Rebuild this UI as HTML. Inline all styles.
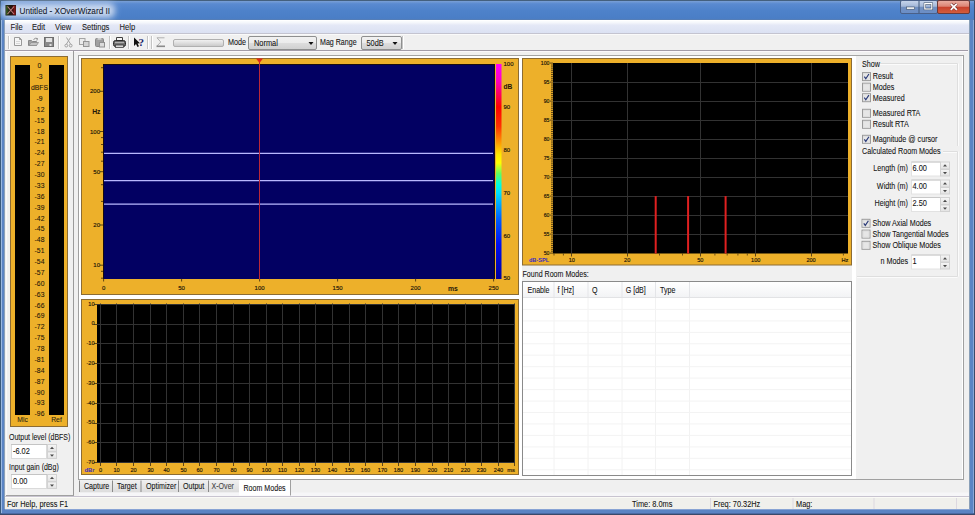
<!DOCTYPE html>
<html><head><meta charset="utf-8"><style>
html,body{margin:0;padding:0;width:975px;height:515px;overflow:hidden;background:#f0f0f0;}
svg{display:block;font-family:"Liberation Sans",sans-serif;}
</style></head><body>
<svg width="975" height="515" viewBox="0 0 975 515">
<defs><linearGradient id="title" x1="0" y1="0" x2="0" y2="1"><stop offset="0" stop-color="#7aa0d6"/><stop offset="0.15" stop-color="#5a8ad0"/><stop offset="0.5" stop-color="#4e82ca"/><stop offset="0.92" stop-color="#4a7ec6"/><stop offset="1" stop-color="#5a7eb0"/></linearGradient><linearGradient id="menu" x1="0" y1="0" x2="0" y2="1"><stop offset="0" stop-color="#ffffff"/><stop offset="0.18" stop-color="#f6f8fc"/><stop offset="0.4" stop-color="#e4e8f6"/><stop offset="1" stop-color="#dbe1f2"/></linearGradient><linearGradient id="close" x1="0" y1="0" x2="0" y2="1"><stop offset="0" stop-color="#eab0a4"/><stop offset="0.45" stop-color="#dc8474"/><stop offset="0.5" stop-color="#c8402c"/><stop offset="1" stop-color="#d4603e"/></linearGradient><linearGradient id="capb" x1="0" y1="0" x2="0" y2="1"><stop offset="0" stop-color="#c8d6ec"/><stop offset="0.45" stop-color="#a4b8d8"/><stop offset="0.5" stop-color="#7290c0"/><stop offset="1" stop-color="#6a8ec8"/></linearGradient><linearGradient id="combo" x1="0" y1="0" x2="0" y2="1"><stop offset="0" stop-color="#f2f2f2"/><stop offset="0.5" stop-color="#ebebeb"/><stop offset="0.51" stop-color="#dddddd"/><stop offset="1" stop-color="#cfcfcf"/></linearGradient><linearGradient id="prog" x1="0" y1="0" x2="0" y2="1"><stop offset="0" stop-color="#f4f4f4"/><stop offset="1" stop-color="#c8c8c8"/></linearGradient><linearGradient id="cbar" x1="0" y1="0" x2="0" y2="1"><stop offset="0" stop-color="#ff00ff"/><stop offset="0.08" stop-color="#ff00c0"/><stop offset="0.15" stop-color="#ff0050"/><stop offset="0.2" stop-color="#ff0000"/><stop offset="0.29" stop-color="#ff3000"/><stop offset="0.36" stop-color="#ff9000"/><stop offset="0.42" stop-color="#ffe800"/><stop offset="0.46" stop-color="#ffff00"/><stop offset="0.51" stop-color="#60ff60"/><stop offset="0.56" stop-color="#00ffe0"/><stop offset="0.6" stop-color="#00e0ff"/><stop offset="0.72" stop-color="#0060ff"/><stop offset="0.84" stop-color="#0010f0"/><stop offset="1" stop-color="#0000a0"/></linearGradient><linearGradient id="spg" x1="0" y1="0" x2="0" y2="1"><stop offset="0" stop-color="#f6f6f6"/><stop offset="1" stop-color="#e2e2e2"/></linearGradient></defs>
<rect x="0" y="0" width="975" height="515" fill="#5a84c4" />
<line x1="0.5" y1="0" x2="0.5" y2="515" stroke="#3a5a7c" stroke-width="1" />
<line x1="974.5" y1="0" x2="974.5" y2="515" stroke="#3a4a6a" stroke-width="1" />
<line x1="1.5" y1="20" x2="1.5" y2="513" stroke="#9ab8e0" stroke-width="1" />
<line x1="973.5" y1="20" x2="973.5" y2="513" stroke="#8aa8d8" stroke-width="1" />
<line x1="4.5" y1="20" x2="4.5" y2="509" stroke="#8aa0b8" stroke-width="1" />
<line x1="969.5" y1="20" x2="969.5" y2="509" stroke="#8aa0b8" stroke-width="1" />
<line x1="0" y1="514.5" x2="975" y2="514.5" stroke="#3a4a6a" stroke-width="1" />
<line x1="5" y1="509.5" x2="970" y2="509.5" stroke="#88a4d4" stroke-width="1" />
<line x1="1" y1="513.5" x2="974" y2="513.5" stroke="#4a6aa4" stroke-width="1" />
<rect x="1" y="1" width="973" height="19" fill="url(#title)" />
<line x1="0" y1="0.5" x2="975" y2="0.5" stroke="#44607e" stroke-width="1" />
<filter id="glow" x="-20%" y="-50%" width="140%" height="200%"><feGaussianBlur stdDeviation="3.2"/></filter>
<rect x="1" y="3" width="114" height="15" rx="6" fill="#cfdcf0" opacity="0.95" filter="url(#glow)"/>
<rect x="5" y="20" width="964" height="489" fill="#f0f0f0" />
<rect x="5.5" y="5" width="10.5" height="10.5" fill="#141414" />
<linearGradient id="icg" x1="0" y1="0" x2="1" y2="0"><stop offset="0" stop-color="#3a6020"/><stop offset="0.35" stop-color="#202010"/><stop offset="0.65" stop-color="#301010"/><stop offset="1" stop-color="#a01818"/></linearGradient>
<rect x="6" y="5.5" width="9.5" height="9.5" fill="url(#icg)" />
<path d="M7.5 6.5 L14 14 M14 6.5 L7.5 14" stroke="#d89090" stroke-width="1.1" opacity="0.85"/>
<text transform="translate(19.5,10.3) scale(1,1.18)" y="2.99" font-size="8.2" fill="#14202e" text-anchor="start" stroke="#14202e" stroke-width="0.07" >Untitled - XOverWizard II</text>
<rect x="900.5" y="0.5" width="37" height="13" rx="1.5" fill="url(#capb)" stroke="#4a6088" stroke-width="1"/>
<line x1="919" y1="1" x2="919" y2="13" stroke="#40587a" stroke-width="1" />
<rect x="937.5" y="0.5" width="32" height="13" rx="1.5" fill="url(#close)" stroke="#6a3a3a" stroke-width="1"/>
<rect x="906.5" y="7" width="8" height="2.2" fill="#ffffff" stroke="#3a4a60" stroke-width="0.6"/>
<rect x="924.8" y="3.6" width="7" height="5.4" fill="none" stroke="#3a4a60" stroke-width="2.2"/><rect x="924.8" y="3.6" width="7" height="5.4" fill="none" stroke="#ffffff" stroke-width="1.2"/>
<path d="M950.8 3.8 L956.8 9.8 M956.8 3.8 L950.8 9.8" stroke="#6a2a2a" stroke-width="2.8"/><path d="M950.8 3.8 L956.8 9.8 M956.8 3.8 L950.8 9.8" stroke="#ffffff" stroke-width="1.8"/>
<rect x="5" y="20" width="964" height="13" fill="url(#menu)" />
<line x1="5" y1="20.5" x2="969" y2="20.5" stroke="#ffffff" stroke-width="1" />
<text transform="translate(10.5,27) scale(1,1.18)" y="2.77" font-size="7.6" fill="#1a1a22" text-anchor="start" stroke="#1a1a22" stroke-width="0.07" >File</text>
<text transform="translate(32,27) scale(1,1.18)" y="2.77" font-size="7.6" fill="#1a1a22" text-anchor="start" stroke="#1a1a22" stroke-width="0.07" >Edit</text>
<text transform="translate(55,27) scale(1,1.18)" y="2.77" font-size="7.6" fill="#1a1a22" text-anchor="start" stroke="#1a1a22" stroke-width="0.07" >View</text>
<text transform="translate(82,27) scale(1,1.18)" y="2.77" font-size="7.6" fill="#1a1a22" text-anchor="start" stroke="#1a1a22" stroke-width="0.07" >Settings</text>
<text transform="translate(119.5,27) scale(1,1.18)" y="2.77" font-size="7.6" fill="#1a1a22" text-anchor="start" stroke="#1a1a22" stroke-width="0.07" >Help</text>
<line x1="5" y1="33.5" x2="969" y2="33.5" stroke="#c4c4d0" stroke-width="1" />
<line x1="5" y1="34.5" x2="969" y2="34.5" stroke="#fafafa" stroke-width="1" />
<line x1="5" y1="50.5" x2="968" y2="50.5" stroke="#a29ca8" stroke-width="1" />
<line x1="5" y1="51.5" x2="968" y2="51.5" stroke="#fbf8fb" stroke-width="1" />
<line x1="8.5" y1="36" x2="8.5" y2="49" stroke="#c4c4c4" stroke-width="1" />
<line x1="9.5" y1="36" x2="9.5" y2="49" stroke="#ffffff" stroke-width="1" />
<line x1="58.5" y1="36" x2="58.5" y2="49" stroke="#c4c4c4" stroke-width="1" />
<line x1="59.5" y1="36" x2="59.5" y2="49" stroke="#ffffff" stroke-width="1" />
<line x1="109.5" y1="36" x2="109.5" y2="49" stroke="#c4c4c4" stroke-width="1" />
<line x1="110.5" y1="36" x2="110.5" y2="49" stroke="#ffffff" stroke-width="1" />
<line x1="128.5" y1="36" x2="128.5" y2="49" stroke="#c4c4c4" stroke-width="1" />
<line x1="129.5" y1="36" x2="129.5" y2="49" stroke="#ffffff" stroke-width="1" />
<line x1="147.5" y1="36" x2="147.5" y2="49" stroke="#c4c4c4" stroke-width="1" />
<line x1="148.5" y1="36" x2="148.5" y2="49" stroke="#ffffff" stroke-width="1" />
<line x1="151.5" y1="36" x2="151.5" y2="49" stroke="#c4c4c4" stroke-width="1" />
<line x1="152.5" y1="36" x2="152.5" y2="49" stroke="#ffffff" stroke-width="1" />
<line x1="402.5" y1="36" x2="402.5" y2="49" stroke="#c4c4c4" stroke-width="1" />
<line x1="403.5" y1="36" x2="403.5" y2="49" stroke="#ffffff" stroke-width="1" />
<path d="M14.5 37.5 H19.5 L21.5 39.5 V45.5 H14.5 Z" fill="#f6f6f6" stroke="#9a9a9a"/>
<path d="M19.5 37.5 V39.5 H21.5" fill="none" stroke="#9a9a9a"/>
<line x1="16" y1="41.5" x2="20" y2="41.5" stroke="#d8d8d8" stroke-width="1" />
<line x1="16" y1="43.5" x2="20" y2="43.5" stroke="#d8d8d8" stroke-width="1" />
<path d="M28.5 40.5 H31.5 L32.5 41.5 H36.5 V45.5 H28.5 Z" fill="#a4a4a4" stroke="#888888"/>
<path d="M29 45.5 L31 42.5 H38.5 L36.5 45.5 Z" fill="#c4c4c4" stroke="#909090" stroke-width="0.8"/>
<path d="M33.5 39.5 Q35.5 37.5 37.5 38.5 L36.8 40.5" fill="none" stroke="#8a8a8a" stroke-width="1"/>
<rect x="44.5" y="37.5" width="9" height="9" fill="#8a8a8a" stroke="#6e6e6e"/>
<rect x="46" y="38" width="6" height="4" fill="#e4e4e4" />
<rect x="49.5" y="44" width="2" height="2" fill="#e0e0e0" />
<path d="M66.5 37.5 L70.5 44 M70.5 37.5 L66.5 44" stroke="#a4a4a4" stroke-width="1"/>
<circle cx="66.3" cy="45.6" r="1.4" fill="none" stroke="#a0a0a0"/><circle cx="70.7" cy="45.6" r="1.4" fill="none" stroke="#a0a0a0"/>
<rect x="79.5" y="38.5" width="5.5" height="6" fill="#ececec" stroke="#a4a4a4"/>
<rect x="83.5" y="41.5" width="5.5" height="5" fill="#d4d4d4" stroke="#949494"/>
<rect x="95.5" y="38.5" width="8" height="8" rx="1" fill="#a0a0a0" stroke="#888888"/>
<rect x="97.5" y="38" width="4" height="1.8" fill="#d0d0d0" />
<rect x="99.5" y="42.5" width="5" height="4.5" fill="#dcdcdc" stroke="#909090"/>
<path d="M116.5 41 V37.5 H122.5 V41" fill="#f4f4f4" stroke="#404040"/>
<rect x="113.5" y="40.5" width="12" height="6" rx="2" fill="#6a6a6a" stroke="#2a2a2a"/>
<rect x="115" y="42" width="9" height="1.2" fill="#b0b0b0" />
<rect x="115.5" y="45" width="8" height="2.5" fill="#d8d8d8" stroke="#404040" stroke-width="0.8"/>
<path d="M134 37.5 L134 46 L136 44 L137.5 47 L139 46.2 L137.6 43.4 L140 43.2 Z" fill="#101010"/>
<text x="138.6" y="45.6" font-size="11" font-weight="bold" font-family="Liberation Serif" fill="#14206a">?</text>
<path d="M164.5 37.8 H157 L160.8 42 L157 46 " fill="none" stroke="#a8a8a8" stroke-width="0.9"/>
<rect x="156.5" y="45.5" width="8.5" height="1.6" fill="#8a8a8a" />
<rect x="173.5" y="39.5" width="50" height="7" rx="1.5" fill="url(#prog)" stroke="#b0b0b0"/>
<text transform="translate(228,42.3) scale(1,1.18)" y="2.63" font-size="7.2" fill="#141414" text-anchor="start" stroke="#141414" stroke-width="0.07" >Mode</text>
<rect x="248.5" y="36.5" width="68" height="13" rx="1.5" fill="url(#combo)" stroke="#8e8f8f"/>
<text transform="translate(254,43) scale(1,1.18)" y="2.7" font-size="7.4" fill="#141414" text-anchor="start" stroke="#141414" stroke-width="0.07" >Normal</text>
<path d="M308.5 42 H313.5 L311 45 Z" fill="#111"/>
<text transform="translate(320,42.3) scale(1,1.18)" y="2.59" font-size="7.1" fill="#141414" text-anchor="start" stroke="#141414" stroke-width="0.07" >Mag Range</text>
<rect x="361.5" y="36.5" width="40" height="13" rx="1.5" fill="url(#combo)" stroke="#8e8f8f"/>
<text transform="translate(366.5,43) scale(1,1.18)" y="2.7" font-size="7.4" fill="#141414" text-anchor="start" stroke="#141414" stroke-width="0.07" >50dB</text>
<path d="M392.5 42 H397.5 L395 45 Z" fill="#111"/>
<line x1="73.5" y1="51" x2="73.5" y2="496" stroke="#9a9a9a" stroke-width="1" />
<line x1="6" y1="495.5" x2="74" y2="495.5" stroke="#a0a0a0" stroke-width="1" />
<line x1="6.5" y1="51" x2="6.5" y2="495" stroke="#fafafa" stroke-width="1" />
<rect x="10.5" y="56.5" width="57" height="370" fill="#edb02a" stroke="#8c6c34"/>
<rect x="15" y="65" width="15" height="350" fill="#000000" />
<rect x="49" y="65" width="15" height="350" fill="#000000" />
<text transform="translate(39.5,65.4) scale(1,1.18)" y="2.48" font-size="6.8" fill="#1c1408" text-anchor="middle" stroke="#1c1408" stroke-width="0.07" >0</text>
<text transform="translate(39.5,76.275) scale(1,1.18)" y="2.48" font-size="6.8" fill="#1c1408" text-anchor="middle" stroke="#1c1408" stroke-width="0.07" >-3</text>
<text transform="translate(39.5,87.15) scale(1,1.18)" y="2.48" font-size="6.8" fill="#1c1408" text-anchor="middle" stroke="#1c1408" stroke-width="0.07" >dBFS</text>
<text transform="translate(39.5,98.025) scale(1,1.18)" y="2.48" font-size="6.8" fill="#1c1408" text-anchor="middle" stroke="#1c1408" stroke-width="0.07" >-9</text>
<text transform="translate(39.5,108.9) scale(1,1.18)" y="2.48" font-size="6.8" fill="#1c1408" text-anchor="middle" stroke="#1c1408" stroke-width="0.07" >-12</text>
<text transform="translate(39.5,119.775) scale(1,1.18)" y="2.48" font-size="6.8" fill="#1c1408" text-anchor="middle" stroke="#1c1408" stroke-width="0.07" >-15</text>
<text transform="translate(39.5,130.65) scale(1,1.18)" y="2.48" font-size="6.8" fill="#1c1408" text-anchor="middle" stroke="#1c1408" stroke-width="0.07" >-18</text>
<text transform="translate(39.5,141.525) scale(1,1.18)" y="2.48" font-size="6.8" fill="#1c1408" text-anchor="middle" stroke="#1c1408" stroke-width="0.07" >-21</text>
<text transform="translate(39.5,152.4) scale(1,1.18)" y="2.48" font-size="6.8" fill="#1c1408" text-anchor="middle" stroke="#1c1408" stroke-width="0.07" >-24</text>
<text transform="translate(39.5,163.275) scale(1,1.18)" y="2.48" font-size="6.8" fill="#1c1408" text-anchor="middle" stroke="#1c1408" stroke-width="0.07" >-27</text>
<text transform="translate(39.5,174.15) scale(1,1.18)" y="2.48" font-size="6.8" fill="#1c1408" text-anchor="middle" stroke="#1c1408" stroke-width="0.07" >-30</text>
<text transform="translate(39.5,185.025) scale(1,1.18)" y="2.48" font-size="6.8" fill="#1c1408" text-anchor="middle" stroke="#1c1408" stroke-width="0.07" >-33</text>
<text transform="translate(39.5,195.9) scale(1,1.18)" y="2.48" font-size="6.8" fill="#1c1408" text-anchor="middle" stroke="#1c1408" stroke-width="0.07" >-36</text>
<text transform="translate(39.5,206.775) scale(1,1.18)" y="2.48" font-size="6.8" fill="#1c1408" text-anchor="middle" stroke="#1c1408" stroke-width="0.07" >-39</text>
<text transform="translate(39.5,217.65) scale(1,1.18)" y="2.48" font-size="6.8" fill="#1c1408" text-anchor="middle" stroke="#1c1408" stroke-width="0.07" >-42</text>
<text transform="translate(39.5,228.525) scale(1,1.18)" y="2.48" font-size="6.8" fill="#1c1408" text-anchor="middle" stroke="#1c1408" stroke-width="0.07" >-45</text>
<text transform="translate(39.5,239.4) scale(1,1.18)" y="2.48" font-size="6.8" fill="#1c1408" text-anchor="middle" stroke="#1c1408" stroke-width="0.07" >-48</text>
<text transform="translate(39.5,250.275) scale(1,1.18)" y="2.48" font-size="6.8" fill="#1c1408" text-anchor="middle" stroke="#1c1408" stroke-width="0.07" >-51</text>
<text transform="translate(39.5,261.15) scale(1,1.18)" y="2.48" font-size="6.8" fill="#1c1408" text-anchor="middle" stroke="#1c1408" stroke-width="0.07" >-54</text>
<text transform="translate(39.5,272.025) scale(1,1.18)" y="2.48" font-size="6.8" fill="#1c1408" text-anchor="middle" stroke="#1c1408" stroke-width="0.07" >-57</text>
<text transform="translate(39.5,282.9) scale(1,1.18)" y="2.48" font-size="6.8" fill="#1c1408" text-anchor="middle" stroke="#1c1408" stroke-width="0.07" >-60</text>
<text transform="translate(39.5,293.775) scale(1,1.18)" y="2.48" font-size="6.8" fill="#1c1408" text-anchor="middle" stroke="#1c1408" stroke-width="0.07" >-63</text>
<text transform="translate(39.5,304.65) scale(1,1.18)" y="2.48" font-size="6.8" fill="#1c1408" text-anchor="middle" stroke="#1c1408" stroke-width="0.07" >-66</text>
<text transform="translate(39.5,315.525) scale(1,1.18)" y="2.48" font-size="6.8" fill="#1c1408" text-anchor="middle" stroke="#1c1408" stroke-width="0.07" >-69</text>
<text transform="translate(39.5,326.4) scale(1,1.18)" y="2.48" font-size="6.8" fill="#1c1408" text-anchor="middle" stroke="#1c1408" stroke-width="0.07" >-72</text>
<text transform="translate(39.5,337.275) scale(1,1.18)" y="2.48" font-size="6.8" fill="#1c1408" text-anchor="middle" stroke="#1c1408" stroke-width="0.07" >-75</text>
<text transform="translate(39.5,348.15) scale(1,1.18)" y="2.48" font-size="6.8" fill="#1c1408" text-anchor="middle" stroke="#1c1408" stroke-width="0.07" >-78</text>
<text transform="translate(39.5,359.025) scale(1,1.18)" y="2.48" font-size="6.8" fill="#1c1408" text-anchor="middle" stroke="#1c1408" stroke-width="0.07" >-81</text>
<text transform="translate(39.5,369.9) scale(1,1.18)" y="2.48" font-size="6.8" fill="#1c1408" text-anchor="middle" stroke="#1c1408" stroke-width="0.07" >-84</text>
<text transform="translate(39.5,380.775) scale(1,1.18)" y="2.48" font-size="6.8" fill="#1c1408" text-anchor="middle" stroke="#1c1408" stroke-width="0.07" >-87</text>
<text transform="translate(39.5,391.65) scale(1,1.18)" y="2.48" font-size="6.8" fill="#1c1408" text-anchor="middle" stroke="#1c1408" stroke-width="0.07" >-90</text>
<text transform="translate(39.5,402.525) scale(1,1.18)" y="2.48" font-size="6.8" fill="#1c1408" text-anchor="middle" stroke="#1c1408" stroke-width="0.07" >-93</text>
<text transform="translate(39.5,413.4) scale(1,1.18)" y="2.48" font-size="6.8" fill="#1c1408" text-anchor="middle" stroke="#1c1408" stroke-width="0.07" >-96</text>
<text transform="translate(22.5,419.5) scale(1,1.18)" y="2.48" font-size="6.8" fill="#2a1e10" text-anchor="middle" stroke="#2a1e10" stroke-width="0.07" >Mic</text>
<text transform="translate(56.5,419.5) scale(1,1.18)" y="2.48" font-size="6.8" fill="#2a1e10" text-anchor="middle" stroke="#2a1e10" stroke-width="0.07" >Ref</text>
<text transform="translate(9,437) scale(1,1.18)" y="2.55" font-size="7" fill="#141414" text-anchor="start" stroke="#141414" stroke-width="0.07" >Output level (dBFS)</text>
<text transform="translate(9,467) scale(1,1.18)" y="2.55" font-size="7" fill="#141414" text-anchor="start" stroke="#141414" stroke-width="0.07" >Input gain (dBg)</text>
<rect x="11.5" y="444.5" width="35" height="14" fill="#ffffff" stroke="#dadada"/>
<line x1="11" y1="444.5" x2="47" y2="444.5" stroke="#c4c4c4" stroke-width="1" />
<text transform="translate(13,450.5) scale(1,1.18)" y="2.7" font-size="7.4" fill="#101010" text-anchor="start" stroke="#101010" stroke-width="0.07" >-6.02</text>
<rect x="47.5" y="444.5" width="9" height="7.0" fill="url(#spg)" stroke="#d2d2d2"/>
<rect x="47.5" y="452.0" width="9" height="6.5" fill="url(#spg)" stroke="#d2d2d2"/>
<path d="M50.0 448.95 H54.0 L52.0 446.75 Z" fill="#4a4a4a"/>
<path d="M50.0 454.45 H54.0 L52.0 456.65 Z" fill="#4a4a4a"/>
<rect x="11.5" y="474.5" width="35" height="14" fill="#ffffff" stroke="#dadada"/>
<line x1="11" y1="474.5" x2="47" y2="474.5" stroke="#c4c4c4" stroke-width="1" />
<text transform="translate(13,480.5) scale(1,1.18)" y="2.7" font-size="7.4" fill="#101010" text-anchor="start" stroke="#101010" stroke-width="0.07" >0.00</text>
<rect x="47.5" y="474.5" width="9" height="7.0" fill="url(#spg)" stroke="#d2d2d2"/>
<rect x="47.5" y="482.0" width="9" height="6.5" fill="url(#spg)" stroke="#d2d2d2"/>
<path d="M50.0 478.95 H54.0 L52.0 476.75 Z" fill="#4a4a4a"/>
<path d="M50.0 484.45 H54.0 L52.0 486.65 Z" fill="#4a4a4a"/>
<rect x="79" y="56" width="777" height="423" fill="#ffffff" />
<rect x="522" y="265" width="330" height="16" fill="#f0f0f0" />
<rect x="856" y="56" width="107" height="423" fill="#f0f0f0" />
<line x1="78" y1="55.5" x2="964" y2="55.5" stroke="#a4a4a4" stroke-width="1" />
<line x1="78.5" y1="55" x2="78.5" y2="480" stroke="#a0a0a0" stroke-width="1" />
<line x1="78" y1="479.5" x2="964" y2="479.5" stroke="#a0a0a0" stroke-width="1" />
<line x1="963.5" y1="55" x2="963.5" y2="480" stroke="#a0a0a0" stroke-width="1" />
<line x1="962.5" y1="56" x2="962.5" y2="479" stroke="#ffffff" stroke-width="1" />
<rect x="81.5" y="58.5" width="437" height="236" fill="#edb02a" stroke="#8c6c34"/>
<rect x="103" y="64" width="392" height="215" fill="#180c10" />
<rect x="104" y="65" width="390" height="214" fill="#020062" />
<rect x="496" y="64" width="5.5" height="215" fill="url(#cbar)" />
<line x1="101" y1="278.2" x2="103" y2="278.2" stroke="#3a2a10" stroke-width="0.8" />
<line x1="101" y1="271.3" x2="103" y2="271.3" stroke="#3a2a10" stroke-width="0.8" />
<line x1="100" y1="265.2" x2="103" y2="265.2" stroke="#3a2a10" stroke-width="0.8" />
<line x1="100" y1="225.0" x2="103" y2="225.0" stroke="#3a2a10" stroke-width="0.8" />
<line x1="101" y1="201.4" x2="103" y2="201.4" stroke="#3a2a10" stroke-width="0.8" />
<line x1="101" y1="184.7" x2="103" y2="184.7" stroke="#3a2a10" stroke-width="0.8" />
<line x1="100" y1="171.7" x2="103" y2="171.7" stroke="#3a2a10" stroke-width="0.8" />
<line x1="101" y1="161.2" x2="103" y2="161.2" stroke="#3a2a10" stroke-width="0.8" />
<line x1="101" y1="152.2" x2="103" y2="152.2" stroke="#3a2a10" stroke-width="0.8" />
<line x1="101" y1="144.5" x2="103" y2="144.5" stroke="#3a2a10" stroke-width="0.8" />
<line x1="101" y1="137.6" x2="103" y2="137.6" stroke="#3a2a10" stroke-width="0.8" />
<line x1="100" y1="131.5" x2="103" y2="131.5" stroke="#3a2a10" stroke-width="0.8" />
<line x1="100" y1="91.3" x2="103" y2="91.3" stroke="#3a2a10" stroke-width="0.8" />
<line x1="101" y1="67.7" x2="103" y2="67.7" stroke="#3a2a10" stroke-width="0.8" />
<text x="100" y="267.39" font-size="6" fill="#1e1608" text-anchor="end" stroke="#1e1608" stroke-width="0.16" >10</text>
<text x="100" y="227.14" font-size="6" fill="#1e1608" text-anchor="end" stroke="#1e1608" stroke-width="0.16" >20</text>
<text x="100" y="173.94" font-size="6" fill="#1e1608" text-anchor="end" stroke="#1e1608" stroke-width="0.16" >50</text>
<text x="100" y="133.69" font-size="6" fill="#1e1608" text-anchor="end" stroke="#1e1608" stroke-width="0.16" >100</text>
<text x="100" y="93.44" font-size="6" fill="#1e1608" text-anchor="end" stroke="#1e1608" stroke-width="0.16" >200</text>
<text x="100.5" y="114.28" font-size="6.8" fill="#1e1608" text-anchor="end" font-weight="bold">Hz</text>
<line x1="103.6" y1="278.5" x2="103.6" y2="281.5" stroke="#3a2a10" stroke-width="0.8" />
<text x="103.6" y="289.69" font-size="6" fill="#1e1608" text-anchor="middle" stroke="#1e1608" stroke-width="0.16" >0</text>
<line x1="181.6" y1="278.5" x2="181.6" y2="281.5" stroke="#3a2a10" stroke-width="0.8" />
<text x="181.6" y="289.69" font-size="6" fill="#1e1608" text-anchor="middle" stroke="#1e1608" stroke-width="0.16" >50</text>
<line x1="259.6" y1="278.5" x2="259.6" y2="281.5" stroke="#3a2a10" stroke-width="0.8" />
<text x="259.6" y="289.69" font-size="6" fill="#1e1608" text-anchor="middle" stroke="#1e1608" stroke-width="0.16" >100</text>
<line x1="337.6" y1="278.5" x2="337.6" y2="281.5" stroke="#3a2a10" stroke-width="0.8" />
<text x="337.6" y="289.69" font-size="6" fill="#1e1608" text-anchor="middle" stroke="#1e1608" stroke-width="0.16" >150</text>
<line x1="415.6" y1="278.5" x2="415.6" y2="281.5" stroke="#3a2a10" stroke-width="0.8" />
<text x="415.6" y="289.69" font-size="6" fill="#1e1608" text-anchor="middle" stroke="#1e1608" stroke-width="0.16" >200</text>
<line x1="493.6" y1="278.5" x2="493.6" y2="281.5" stroke="#3a2a10" stroke-width="0.8" />
<text x="493.6" y="289.69" font-size="6" fill="#1e1608" text-anchor="middle" stroke="#1e1608" stroke-width="0.16" >250</text>
<text x="453" y="290.98" font-size="6.8" fill="#1e1608" text-anchor="middle" font-weight="bold">ms</text>
<text x="503.5" y="66.19" font-size="6" fill="#1e1608" text-anchor="start" stroke="#1e1608" stroke-width="0.16" >100</text>
<text x="503.5" y="88.91" font-size="6.6" fill="#1e1608" text-anchor="start" font-weight="bold">dB</text>
<text x="503.5" y="109.19" font-size="6" fill="#1e1608" text-anchor="start" stroke="#1e1608" stroke-width="0.16" >90</text>
<text x="503.5" y="152.19" font-size="6" fill="#1e1608" text-anchor="start" stroke="#1e1608" stroke-width="0.16" >80</text>
<text x="503.5" y="194.69" font-size="6" fill="#1e1608" text-anchor="start" stroke="#1e1608" stroke-width="0.16" >70</text>
<text x="503.5" y="237.69" font-size="6" fill="#1e1608" text-anchor="start" stroke="#1e1608" stroke-width="0.16" >60</text>
<text x="503.5" y="280.19" font-size="6" fill="#1e1608" text-anchor="start" stroke="#1e1608" stroke-width="0.16" >50</text>
<line x1="104" y1="204.2" x2="493" y2="204.2" stroke="#b8b8ff" stroke-width="1.2" />
<line x1="104" y1="180.7" x2="493" y2="180.7" stroke="#b8b8ff" stroke-width="1.2" />
<line x1="104" y1="153.4" x2="493" y2="153.4" stroke="#b8b8ff" stroke-width="1.2" />
<line x1="259.5" y1="59" x2="259.5" y2="279" stroke="#b82838" stroke-width="1" />
<path d="M256 58.5 H263 L259.5 63 Z" fill="#e02818"/>
<rect x="81.5" y="299.5" width="437" height="175" fill="#edb02a" stroke="#8c6c34"/>
<rect x="97" y="304" width="418" height="159" fill="#000000" />
<line x1="100.5" y1="303.5" x2="100.5" y2="462.5" stroke="#323232" stroke-width="1" />
<line x1="100.5" y1="462.5" x2="100.5" y2="466" stroke="#3a2a10" stroke-width="0.8" />
<text x="100.5" y="472.04" font-size="5.6" fill="#1e1608" text-anchor="middle" stroke="#1e1608" stroke-width="0.16" >0</text>
<line x1="116.5" y1="303.5" x2="116.5" y2="462.5" stroke="#323232" stroke-width="1" />
<line x1="116.5" y1="462.5" x2="116.5" y2="466" stroke="#3a2a10" stroke-width="0.8" />
<text x="116.5" y="472.04" font-size="5.6" fill="#1e1608" text-anchor="middle" stroke="#1e1608" stroke-width="0.16" >10</text>
<line x1="133.5" y1="303.5" x2="133.5" y2="462.5" stroke="#323232" stroke-width="1" />
<line x1="133.5" y1="462.5" x2="133.5" y2="466" stroke="#3a2a10" stroke-width="0.8" />
<text x="133.5" y="472.04" font-size="5.6" fill="#1e1608" text-anchor="middle" stroke="#1e1608" stroke-width="0.16" >20</text>
<line x1="150.5" y1="303.5" x2="150.5" y2="462.5" stroke="#323232" stroke-width="1" />
<line x1="150.5" y1="462.5" x2="150.5" y2="466" stroke="#3a2a10" stroke-width="0.8" />
<text x="150.5" y="472.04" font-size="5.6" fill="#1e1608" text-anchor="middle" stroke="#1e1608" stroke-width="0.16" >30</text>
<line x1="166.5" y1="303.5" x2="166.5" y2="462.5" stroke="#323232" stroke-width="1" />
<line x1="166.5" y1="462.5" x2="166.5" y2="466" stroke="#3a2a10" stroke-width="0.8" />
<text x="166.5" y="472.04" font-size="5.6" fill="#1e1608" text-anchor="middle" stroke="#1e1608" stroke-width="0.16" >40</text>
<line x1="183.5" y1="303.5" x2="183.5" y2="462.5" stroke="#323232" stroke-width="1" />
<line x1="183.5" y1="462.5" x2="183.5" y2="466" stroke="#3a2a10" stroke-width="0.8" />
<text x="183.5" y="472.04" font-size="5.6" fill="#1e1608" text-anchor="middle" stroke="#1e1608" stroke-width="0.16" >50</text>
<line x1="199.5" y1="303.5" x2="199.5" y2="462.5" stroke="#323232" stroke-width="1" />
<line x1="199.5" y1="462.5" x2="199.5" y2="466" stroke="#3a2a10" stroke-width="0.8" />
<text x="199.5" y="472.04" font-size="5.6" fill="#1e1608" text-anchor="middle" stroke="#1e1608" stroke-width="0.16" >60</text>
<line x1="216.5" y1="303.5" x2="216.5" y2="462.5" stroke="#323232" stroke-width="1" />
<line x1="216.5" y1="462.5" x2="216.5" y2="466" stroke="#3a2a10" stroke-width="0.8" />
<text x="216.5" y="472.04" font-size="5.6" fill="#1e1608" text-anchor="middle" stroke="#1e1608" stroke-width="0.16" >70</text>
<line x1="233.5" y1="303.5" x2="233.5" y2="462.5" stroke="#323232" stroke-width="1" />
<line x1="233.5" y1="462.5" x2="233.5" y2="466" stroke="#3a2a10" stroke-width="0.8" />
<text x="233.5" y="472.04" font-size="5.6" fill="#1e1608" text-anchor="middle" stroke="#1e1608" stroke-width="0.16" >80</text>
<line x1="249.5" y1="303.5" x2="249.5" y2="462.5" stroke="#323232" stroke-width="1" />
<line x1="249.5" y1="462.5" x2="249.5" y2="466" stroke="#3a2a10" stroke-width="0.8" />
<text x="249.5" y="472.04" font-size="5.6" fill="#1e1608" text-anchor="middle" stroke="#1e1608" stroke-width="0.16" >90</text>
<line x1="266.5" y1="303.5" x2="266.5" y2="462.5" stroke="#323232" stroke-width="1" />
<line x1="266.5" y1="462.5" x2="266.5" y2="466" stroke="#3a2a10" stroke-width="0.8" />
<text x="266.5" y="472.04" font-size="5.6" fill="#1e1608" text-anchor="middle" stroke="#1e1608" stroke-width="0.16" >100</text>
<line x1="282.5" y1="303.5" x2="282.5" y2="462.5" stroke="#323232" stroke-width="1" />
<line x1="282.5" y1="462.5" x2="282.5" y2="466" stroke="#3a2a10" stroke-width="0.8" />
<text x="282.5" y="472.04" font-size="5.6" fill="#1e1608" text-anchor="middle" stroke="#1e1608" stroke-width="0.16" >110</text>
<line x1="299.5" y1="303.5" x2="299.5" y2="462.5" stroke="#323232" stroke-width="1" />
<line x1="299.5" y1="462.5" x2="299.5" y2="466" stroke="#3a2a10" stroke-width="0.8" />
<text x="299.5" y="472.04" font-size="5.6" fill="#1e1608" text-anchor="middle" stroke="#1e1608" stroke-width="0.16" >120</text>
<line x1="315.5" y1="303.5" x2="315.5" y2="462.5" stroke="#323232" stroke-width="1" />
<line x1="315.5" y1="462.5" x2="315.5" y2="466" stroke="#3a2a10" stroke-width="0.8" />
<text x="315.5" y="472.04" font-size="5.6" fill="#1e1608" text-anchor="middle" stroke="#1e1608" stroke-width="0.16" >130</text>
<line x1="332.5" y1="303.5" x2="332.5" y2="462.5" stroke="#323232" stroke-width="1" />
<line x1="332.5" y1="462.5" x2="332.5" y2="466" stroke="#3a2a10" stroke-width="0.8" />
<text x="332.5" y="472.04" font-size="5.6" fill="#1e1608" text-anchor="middle" stroke="#1e1608" stroke-width="0.16" >140</text>
<line x1="349.5" y1="303.5" x2="349.5" y2="462.5" stroke="#323232" stroke-width="1" />
<line x1="349.5" y1="462.5" x2="349.5" y2="466" stroke="#3a2a10" stroke-width="0.8" />
<text x="349.5" y="472.04" font-size="5.6" fill="#1e1608" text-anchor="middle" stroke="#1e1608" stroke-width="0.16" >150</text>
<line x1="365.5" y1="303.5" x2="365.5" y2="462.5" stroke="#323232" stroke-width="1" />
<line x1="365.5" y1="462.5" x2="365.5" y2="466" stroke="#3a2a10" stroke-width="0.8" />
<text x="365.5" y="472.04" font-size="5.6" fill="#1e1608" text-anchor="middle" stroke="#1e1608" stroke-width="0.16" >160</text>
<line x1="382.5" y1="303.5" x2="382.5" y2="462.5" stroke="#323232" stroke-width="1" />
<line x1="382.5" y1="462.5" x2="382.5" y2="466" stroke="#3a2a10" stroke-width="0.8" />
<text x="382.5" y="472.04" font-size="5.6" fill="#1e1608" text-anchor="middle" stroke="#1e1608" stroke-width="0.16" >170</text>
<line x1="398.5" y1="303.5" x2="398.5" y2="462.5" stroke="#323232" stroke-width="1" />
<line x1="398.5" y1="462.5" x2="398.5" y2="466" stroke="#3a2a10" stroke-width="0.8" />
<text x="398.5" y="472.04" font-size="5.6" fill="#1e1608" text-anchor="middle" stroke="#1e1608" stroke-width="0.16" >180</text>
<line x1="415.5" y1="303.5" x2="415.5" y2="462.5" stroke="#323232" stroke-width="1" />
<line x1="415.5" y1="462.5" x2="415.5" y2="466" stroke="#3a2a10" stroke-width="0.8" />
<text x="415.5" y="472.04" font-size="5.6" fill="#1e1608" text-anchor="middle" stroke="#1e1608" stroke-width="0.16" >190</text>
<line x1="432.5" y1="303.5" x2="432.5" y2="462.5" stroke="#323232" stroke-width="1" />
<line x1="432.5" y1="462.5" x2="432.5" y2="466" stroke="#3a2a10" stroke-width="0.8" />
<text x="432.5" y="472.04" font-size="5.6" fill="#1e1608" text-anchor="middle" stroke="#1e1608" stroke-width="0.16" >200</text>
<line x1="448.5" y1="303.5" x2="448.5" y2="462.5" stroke="#323232" stroke-width="1" />
<line x1="448.5" y1="462.5" x2="448.5" y2="466" stroke="#3a2a10" stroke-width="0.8" />
<text x="448.5" y="472.04" font-size="5.6" fill="#1e1608" text-anchor="middle" stroke="#1e1608" stroke-width="0.16" >210</text>
<line x1="465.5" y1="303.5" x2="465.5" y2="462.5" stroke="#323232" stroke-width="1" />
<line x1="465.5" y1="462.5" x2="465.5" y2="466" stroke="#3a2a10" stroke-width="0.8" />
<text x="465.5" y="472.04" font-size="5.6" fill="#1e1608" text-anchor="middle" stroke="#1e1608" stroke-width="0.16" >220</text>
<line x1="481.5" y1="303.5" x2="481.5" y2="462.5" stroke="#323232" stroke-width="1" />
<line x1="481.5" y1="462.5" x2="481.5" y2="466" stroke="#3a2a10" stroke-width="0.8" />
<text x="481.5" y="472.04" font-size="5.6" fill="#1e1608" text-anchor="middle" stroke="#1e1608" stroke-width="0.16" >230</text>
<line x1="498.5" y1="303.5" x2="498.5" y2="462.5" stroke="#323232" stroke-width="1" />
<line x1="498.5" y1="462.5" x2="498.5" y2="466" stroke="#3a2a10" stroke-width="0.8" />
<text x="498.5" y="472.04" font-size="5.6" fill="#1e1608" text-anchor="middle" stroke="#1e1608" stroke-width="0.16" >240</text>
<line x1="514.5" y1="303.5" x2="514.5" y2="462.5" stroke="#323232" stroke-width="1" />
<line x1="514.5" y1="462.5" x2="514.5" y2="466" stroke="#3a2a10" stroke-width="0.8" />
<line x1="97" y1="304.5" x2="515" y2="304.5" stroke="#323232" stroke-width="1" />
<line x1="94" y1="304.5" x2="97" y2="304.5" stroke="#3a2a10" stroke-width="0.8" />
<text x="94.5" y="305.54" font-size="5.6" fill="#1e1608" text-anchor="end" stroke="#1e1608" stroke-width="0.16" >10</text>
<line x1="97" y1="324.5" x2="515" y2="324.5" stroke="#323232" stroke-width="1" />
<line x1="94" y1="324.5" x2="97" y2="324.5" stroke="#3a2a10" stroke-width="0.8" />
<text x="94.5" y="325.34" font-size="5.6" fill="#1e1608" text-anchor="end" stroke="#1e1608" stroke-width="0.16" >0</text>
<line x1="97" y1="343.5" x2="515" y2="343.5" stroke="#323232" stroke-width="1" />
<line x1="94" y1="343.5" x2="97" y2="343.5" stroke="#3a2a10" stroke-width="0.8" />
<text x="94.5" y="345.14" font-size="5.6" fill="#1e1608" text-anchor="end" stroke="#1e1608" stroke-width="0.16" >-10</text>
<line x1="97" y1="363.5" x2="515" y2="363.5" stroke="#323232" stroke-width="1" />
<line x1="94" y1="363.5" x2="97" y2="363.5" stroke="#3a2a10" stroke-width="0.8" />
<text x="94.5" y="364.94" font-size="5.6" fill="#1e1608" text-anchor="end" stroke="#1e1608" stroke-width="0.16" >-20</text>
<line x1="97" y1="383.5" x2="515" y2="383.5" stroke="#323232" stroke-width="1" />
<line x1="94" y1="383.5" x2="97" y2="383.5" stroke="#3a2a10" stroke-width="0.8" />
<text x="94.5" y="384.74" font-size="5.6" fill="#1e1608" text-anchor="end" stroke="#1e1608" stroke-width="0.16" >-30</text>
<line x1="97" y1="403.5" x2="515" y2="403.5" stroke="#323232" stroke-width="1" />
<line x1="94" y1="403.5" x2="97" y2="403.5" stroke="#3a2a10" stroke-width="0.8" />
<text x="94.5" y="404.54" font-size="5.6" fill="#1e1608" text-anchor="end" stroke="#1e1608" stroke-width="0.16" >-40</text>
<line x1="97" y1="423.5" x2="515" y2="423.5" stroke="#323232" stroke-width="1" />
<line x1="94" y1="423.5" x2="97" y2="423.5" stroke="#3a2a10" stroke-width="0.8" />
<text x="94.5" y="424.34" font-size="5.6" fill="#1e1608" text-anchor="end" stroke="#1e1608" stroke-width="0.16" >-50</text>
<line x1="97" y1="442.5" x2="515" y2="442.5" stroke="#323232" stroke-width="1" />
<line x1="94" y1="442.5" x2="97" y2="442.5" stroke="#3a2a10" stroke-width="0.8" />
<text x="94.5" y="444.14" font-size="5.6" fill="#1e1608" text-anchor="end" stroke="#1e1608" stroke-width="0.16" >-60</text>
<line x1="97" y1="462.5" x2="515" y2="462.5" stroke="#323232" stroke-width="1" />
<line x1="94" y1="462.5" x2="97" y2="462.5" stroke="#3a2a10" stroke-width="0.8" />
<text x="94.5" y="463.94" font-size="5.6" fill="#1e1608" text-anchor="end" stroke="#1e1608" stroke-width="0.16" >-70</text>
<text x="511" y="472.12" font-size="5.8" fill="#1e1608" text-anchor="middle" stroke="#1e1608" stroke-width="0.16" >ms</text>
<text x="89.5" y="472.12" font-size="5.8" fill="#3a2cc0" text-anchor="middle" font-weight="bold">dBr</text>
<rect x="522.5" y="58.5" width="329" height="206.5" fill="#edb02a" stroke="#8c6c34"/>
<rect x="553" y="63" width="295" height="190.5" fill="#000000" />
<line x1="571.5" y1="63" x2="571.5" y2="253.5" stroke="#323232" stroke-width="1" />
<line x1="571.5" y1="253.5" x2="571.5" y2="256.5" stroke="#3a2a10" stroke-width="0.8" />
<line x1="627.5" y1="63" x2="627.5" y2="253.5" stroke="#323232" stroke-width="1" />
<line x1="627.5" y1="253.5" x2="627.5" y2="256.5" stroke="#3a2a10" stroke-width="0.8" />
<line x1="700.5" y1="63" x2="700.5" y2="253.5" stroke="#323232" stroke-width="1" />
<line x1="700.5" y1="253.5" x2="700.5" y2="256.5" stroke="#3a2a10" stroke-width="0.8" />
<line x1="755.5" y1="63" x2="755.5" y2="253.5" stroke="#323232" stroke-width="1" />
<line x1="755.5" y1="253.5" x2="755.5" y2="256.5" stroke="#3a2a10" stroke-width="0.8" />
<line x1="811.5" y1="63" x2="811.5" y2="253.5" stroke="#323232" stroke-width="1" />
<line x1="811.5" y1="253.5" x2="811.5" y2="256.5" stroke="#3a2a10" stroke-width="0.8" />
<line x1="554.0" y1="253.5" x2="554.0" y2="255.5" stroke="#3a2a10" stroke-width="0.7" />
<line x1="563.4" y1="253.5" x2="563.4" y2="255.5" stroke="#3a2a10" stroke-width="0.7" />
<line x1="659.5" y1="253.5" x2="659.5" y2="255.5" stroke="#3a2a10" stroke-width="0.7" />
<line x1="682.5" y1="253.5" x2="682.5" y2="255.5" stroke="#3a2a10" stroke-width="0.7" />
<line x1="714.9" y1="253.5" x2="714.9" y2="255.5" stroke="#3a2a10" stroke-width="0.7" />
<line x1="727.2" y1="253.5" x2="727.2" y2="255.5" stroke="#3a2a10" stroke-width="0.7" />
<line x1="737.9" y1="253.5" x2="737.9" y2="255.5" stroke="#3a2a10" stroke-width="0.7" />
<line x1="747.3" y1="253.5" x2="747.3" y2="255.5" stroke="#3a2a10" stroke-width="0.7" />
<line x1="843.4" y1="253.5" x2="843.4" y2="255.5" stroke="#3a2a10" stroke-width="0.7" />
<line x1="553" y1="82.5" x2="848" y2="82.5" stroke="#323232" stroke-width="1" />
<line x1="553" y1="101.5" x2="848" y2="101.5" stroke="#323232" stroke-width="1" />
<line x1="553" y1="120.5" x2="848" y2="120.5" stroke="#323232" stroke-width="1" />
<line x1="553" y1="139.5" x2="848" y2="139.5" stroke="#323232" stroke-width="1" />
<line x1="553" y1="158.5" x2="848" y2="158.5" stroke="#323232" stroke-width="1" />
<line x1="553" y1="177.5" x2="848" y2="177.5" stroke="#323232" stroke-width="1" />
<line x1="553" y1="196.5" x2="848" y2="196.5" stroke="#323232" stroke-width="1" />
<line x1="553" y1="215.5" x2="848" y2="215.5" stroke="#323232" stroke-width="1" />
<line x1="553" y1="234.5" x2="848" y2="234.5" stroke="#323232" stroke-width="1" />
<line x1="550" y1="253.1" x2="553" y2="253.1" stroke="#3a2a10" stroke-width="0.8" />
<line x1="551" y1="251.2" x2="553" y2="251.2" stroke="#3a2a10" stroke-width="0.8" />
<line x1="551" y1="249.3" x2="553" y2="249.3" stroke="#3a2a10" stroke-width="0.8" />
<line x1="551" y1="247.4" x2="553" y2="247.4" stroke="#3a2a10" stroke-width="0.8" />
<line x1="551" y1="245.5" x2="553" y2="245.5" stroke="#3a2a10" stroke-width="0.8" />
<line x1="551" y1="243.6" x2="553" y2="243.6" stroke="#3a2a10" stroke-width="0.8" />
<line x1="551" y1="241.7" x2="553" y2="241.7" stroke="#3a2a10" stroke-width="0.8" />
<line x1="551" y1="239.8" x2="553" y2="239.8" stroke="#3a2a10" stroke-width="0.8" />
<line x1="551" y1="237.9" x2="553" y2="237.9" stroke="#3a2a10" stroke-width="0.8" />
<line x1="551" y1="236.0" x2="553" y2="236.0" stroke="#3a2a10" stroke-width="0.8" />
<line x1="550" y1="234.1" x2="553" y2="234.1" stroke="#3a2a10" stroke-width="0.8" />
<line x1="551" y1="232.2" x2="553" y2="232.2" stroke="#3a2a10" stroke-width="0.8" />
<line x1="551" y1="230.3" x2="553" y2="230.3" stroke="#3a2a10" stroke-width="0.8" />
<line x1="551" y1="228.4" x2="553" y2="228.4" stroke="#3a2a10" stroke-width="0.8" />
<line x1="551" y1="226.5" x2="553" y2="226.5" stroke="#3a2a10" stroke-width="0.8" />
<line x1="551" y1="224.6" x2="553" y2="224.6" stroke="#3a2a10" stroke-width="0.8" />
<line x1="551" y1="222.7" x2="553" y2="222.7" stroke="#3a2a10" stroke-width="0.8" />
<line x1="551" y1="220.8" x2="553" y2="220.8" stroke="#3a2a10" stroke-width="0.8" />
<line x1="551" y1="218.9" x2="553" y2="218.9" stroke="#3a2a10" stroke-width="0.8" />
<line x1="551" y1="217.0" x2="553" y2="217.0" stroke="#3a2a10" stroke-width="0.8" />
<line x1="550" y1="215.1" x2="553" y2="215.1" stroke="#3a2a10" stroke-width="0.8" />
<line x1="551" y1="213.2" x2="553" y2="213.2" stroke="#3a2a10" stroke-width="0.8" />
<line x1="551" y1="211.3" x2="553" y2="211.3" stroke="#3a2a10" stroke-width="0.8" />
<line x1="551" y1="209.4" x2="553" y2="209.4" stroke="#3a2a10" stroke-width="0.8" />
<line x1="551" y1="207.5" x2="553" y2="207.5" stroke="#3a2a10" stroke-width="0.8" />
<line x1="551" y1="205.6" x2="553" y2="205.6" stroke="#3a2a10" stroke-width="0.8" />
<line x1="551" y1="203.7" x2="553" y2="203.7" stroke="#3a2a10" stroke-width="0.8" />
<line x1="551" y1="201.8" x2="553" y2="201.8" stroke="#3a2a10" stroke-width="0.8" />
<line x1="551" y1="199.9" x2="553" y2="199.9" stroke="#3a2a10" stroke-width="0.8" />
<line x1="551" y1="198.0" x2="553" y2="198.0" stroke="#3a2a10" stroke-width="0.8" />
<line x1="550" y1="196.1" x2="553" y2="196.1" stroke="#3a2a10" stroke-width="0.8" />
<line x1="551" y1="194.2" x2="553" y2="194.2" stroke="#3a2a10" stroke-width="0.8" />
<line x1="551" y1="192.3" x2="553" y2="192.3" stroke="#3a2a10" stroke-width="0.8" />
<line x1="551" y1="190.4" x2="553" y2="190.4" stroke="#3a2a10" stroke-width="0.8" />
<line x1="551" y1="188.5" x2="553" y2="188.5" stroke="#3a2a10" stroke-width="0.8" />
<line x1="551" y1="186.6" x2="553" y2="186.6" stroke="#3a2a10" stroke-width="0.8" />
<line x1="551" y1="184.7" x2="553" y2="184.7" stroke="#3a2a10" stroke-width="0.8" />
<line x1="551" y1="182.8" x2="553" y2="182.8" stroke="#3a2a10" stroke-width="0.8" />
<line x1="551" y1="180.9" x2="553" y2="180.9" stroke="#3a2a10" stroke-width="0.8" />
<line x1="551" y1="179.0" x2="553" y2="179.0" stroke="#3a2a10" stroke-width="0.8" />
<line x1="550" y1="177.1" x2="553" y2="177.1" stroke="#3a2a10" stroke-width="0.8" />
<line x1="551" y1="175.2" x2="553" y2="175.2" stroke="#3a2a10" stroke-width="0.8" />
<line x1="551" y1="173.3" x2="553" y2="173.3" stroke="#3a2a10" stroke-width="0.8" />
<line x1="551" y1="171.4" x2="553" y2="171.4" stroke="#3a2a10" stroke-width="0.8" />
<line x1="551" y1="169.5" x2="553" y2="169.5" stroke="#3a2a10" stroke-width="0.8" />
<line x1="551" y1="167.6" x2="553" y2="167.6" stroke="#3a2a10" stroke-width="0.8" />
<line x1="551" y1="165.7" x2="553" y2="165.7" stroke="#3a2a10" stroke-width="0.8" />
<line x1="551" y1="163.8" x2="553" y2="163.8" stroke="#3a2a10" stroke-width="0.8" />
<line x1="551" y1="161.9" x2="553" y2="161.9" stroke="#3a2a10" stroke-width="0.8" />
<line x1="551" y1="160.0" x2="553" y2="160.0" stroke="#3a2a10" stroke-width="0.8" />
<line x1="550" y1="158.1" x2="553" y2="158.1" stroke="#3a2a10" stroke-width="0.8" />
<line x1="551" y1="156.2" x2="553" y2="156.2" stroke="#3a2a10" stroke-width="0.8" />
<line x1="551" y1="154.3" x2="553" y2="154.3" stroke="#3a2a10" stroke-width="0.8" />
<line x1="551" y1="152.4" x2="553" y2="152.4" stroke="#3a2a10" stroke-width="0.8" />
<line x1="551" y1="150.5" x2="553" y2="150.5" stroke="#3a2a10" stroke-width="0.8" />
<line x1="551" y1="148.6" x2="553" y2="148.6" stroke="#3a2a10" stroke-width="0.8" />
<line x1="551" y1="146.7" x2="553" y2="146.7" stroke="#3a2a10" stroke-width="0.8" />
<line x1="551" y1="144.8" x2="553" y2="144.8" stroke="#3a2a10" stroke-width="0.8" />
<line x1="551" y1="142.9" x2="553" y2="142.9" stroke="#3a2a10" stroke-width="0.8" />
<line x1="551" y1="141.0" x2="553" y2="141.0" stroke="#3a2a10" stroke-width="0.8" />
<line x1="550" y1="139.1" x2="553" y2="139.1" stroke="#3a2a10" stroke-width="0.8" />
<line x1="551" y1="137.2" x2="553" y2="137.2" stroke="#3a2a10" stroke-width="0.8" />
<line x1="551" y1="135.3" x2="553" y2="135.3" stroke="#3a2a10" stroke-width="0.8" />
<line x1="551" y1="133.4" x2="553" y2="133.4" stroke="#3a2a10" stroke-width="0.8" />
<line x1="551" y1="131.5" x2="553" y2="131.5" stroke="#3a2a10" stroke-width="0.8" />
<line x1="551" y1="129.6" x2="553" y2="129.6" stroke="#3a2a10" stroke-width="0.8" />
<line x1="551" y1="127.7" x2="553" y2="127.7" stroke="#3a2a10" stroke-width="0.8" />
<line x1="551" y1="125.8" x2="553" y2="125.8" stroke="#3a2a10" stroke-width="0.8" />
<line x1="551" y1="123.9" x2="553" y2="123.9" stroke="#3a2a10" stroke-width="0.8" />
<line x1="551" y1="122.0" x2="553" y2="122.0" stroke="#3a2a10" stroke-width="0.8" />
<line x1="550" y1="120.1" x2="553" y2="120.1" stroke="#3a2a10" stroke-width="0.8" />
<line x1="551" y1="118.2" x2="553" y2="118.2" stroke="#3a2a10" stroke-width="0.8" />
<line x1="551" y1="116.3" x2="553" y2="116.3" stroke="#3a2a10" stroke-width="0.8" />
<line x1="551" y1="114.4" x2="553" y2="114.4" stroke="#3a2a10" stroke-width="0.8" />
<line x1="551" y1="112.5" x2="553" y2="112.5" stroke="#3a2a10" stroke-width="0.8" />
<line x1="551" y1="110.6" x2="553" y2="110.6" stroke="#3a2a10" stroke-width="0.8" />
<line x1="551" y1="108.7" x2="553" y2="108.7" stroke="#3a2a10" stroke-width="0.8" />
<line x1="551" y1="106.8" x2="553" y2="106.8" stroke="#3a2a10" stroke-width="0.8" />
<line x1="551" y1="104.9" x2="553" y2="104.9" stroke="#3a2a10" stroke-width="0.8" />
<line x1="551" y1="103.0" x2="553" y2="103.0" stroke="#3a2a10" stroke-width="0.8" />
<line x1="550" y1="101.1" x2="553" y2="101.1" stroke="#3a2a10" stroke-width="0.8" />
<line x1="551" y1="99.2" x2="553" y2="99.2" stroke="#3a2a10" stroke-width="0.8" />
<line x1="551" y1="97.3" x2="553" y2="97.3" stroke="#3a2a10" stroke-width="0.8" />
<line x1="551" y1="95.4" x2="553" y2="95.4" stroke="#3a2a10" stroke-width="0.8" />
<line x1="551" y1="93.5" x2="553" y2="93.5" stroke="#3a2a10" stroke-width="0.8" />
<line x1="551" y1="91.6" x2="553" y2="91.6" stroke="#3a2a10" stroke-width="0.8" />
<line x1="551" y1="89.7" x2="553" y2="89.7" stroke="#3a2a10" stroke-width="0.8" />
<line x1="551" y1="87.8" x2="553" y2="87.8" stroke="#3a2a10" stroke-width="0.8" />
<line x1="551" y1="85.9" x2="553" y2="85.9" stroke="#3a2a10" stroke-width="0.8" />
<line x1="551" y1="84.0" x2="553" y2="84.0" stroke="#3a2a10" stroke-width="0.8" />
<line x1="550" y1="82.1" x2="553" y2="82.1" stroke="#3a2a10" stroke-width="0.8" />
<line x1="551" y1="80.2" x2="553" y2="80.2" stroke="#3a2a10" stroke-width="0.8" />
<line x1="551" y1="78.3" x2="553" y2="78.3" stroke="#3a2a10" stroke-width="0.8" />
<line x1="551" y1="76.4" x2="553" y2="76.4" stroke="#3a2a10" stroke-width="0.8" />
<line x1="551" y1="74.5" x2="553" y2="74.5" stroke="#3a2a10" stroke-width="0.8" />
<line x1="551" y1="72.6" x2="553" y2="72.6" stroke="#3a2a10" stroke-width="0.8" />
<line x1="551" y1="70.7" x2="553" y2="70.7" stroke="#3a2a10" stroke-width="0.8" />
<line x1="551" y1="68.8" x2="553" y2="68.8" stroke="#3a2a10" stroke-width="0.8" />
<line x1="551" y1="66.9" x2="553" y2="66.9" stroke="#3a2a10" stroke-width="0.8" />
<line x1="551" y1="65.0" x2="553" y2="65.0" stroke="#3a2a10" stroke-width="0.8" />
<line x1="550" y1="63.1" x2="553" y2="63.1" stroke="#3a2a10" stroke-width="0.8" />
<text x="549.5" y="255.0" font-size="5.2" fill="#1e1608" text-anchor="end" stroke="#1e1608" stroke-width="0.16" >50</text>
<text x="549.5" y="236.0" font-size="5.2" fill="#1e1608" text-anchor="end" stroke="#1e1608" stroke-width="0.16" >55</text>
<text x="549.5" y="217.0" font-size="5.2" fill="#1e1608" text-anchor="end" stroke="#1e1608" stroke-width="0.16" >60</text>
<text x="549.5" y="198.0" font-size="5.2" fill="#1e1608" text-anchor="end" stroke="#1e1608" stroke-width="0.16" >65</text>
<text x="549.5" y="179.0" font-size="5.2" fill="#1e1608" text-anchor="end" stroke="#1e1608" stroke-width="0.16" >70</text>
<text x="549.5" y="160.0" font-size="5.2" fill="#1e1608" text-anchor="end" stroke="#1e1608" stroke-width="0.16" >75</text>
<text x="549.5" y="141.0" font-size="5.2" fill="#1e1608" text-anchor="end" stroke="#1e1608" stroke-width="0.16" >80</text>
<text x="549.5" y="122.0" font-size="5.2" fill="#1e1608" text-anchor="end" stroke="#1e1608" stroke-width="0.16" >85</text>
<text x="549.5" y="103.0" font-size="5.2" fill="#1e1608" text-anchor="end" stroke="#1e1608" stroke-width="0.16" >90</text>
<text x="549.5" y="84.0" font-size="5.2" fill="#1e1608" text-anchor="end" stroke="#1e1608" stroke-width="0.16" >95</text>
<text x="549.5" y="65.0" font-size="5.2" fill="#1e1608" text-anchor="end" stroke="#1e1608" stroke-width="0.16" >100</text>
<text x="571.8" y="262.04" font-size="5.6" fill="#1e1608" text-anchor="middle" stroke="#1e1608" stroke-width="0.16" >10</text>
<text x="627.159416202606" y="262.04" font-size="5.6" fill="#1e1608" text-anchor="middle" stroke="#1e1608" stroke-width="0.16" >20</text>
<text x="700.3405837973938" y="262.04" font-size="5.6" fill="#1e1608" text-anchor="middle" stroke="#1e1608" stroke-width="0.16" >50</text>
<text x="755.6999999999999" y="262.04" font-size="5.6" fill="#1e1608" text-anchor="middle" stroke="#1e1608" stroke-width="0.16" >100</text>
<text x="811.0594162026061" y="262.04" font-size="5.6" fill="#1e1608" text-anchor="middle" stroke="#1e1608" stroke-width="0.16" >200</text>
<text x="845" y="262.04" font-size="5.6" fill="#1e1608" text-anchor="middle" stroke="#1e1608" stroke-width="0.16" >Hz</text>
<text x="539" y="262.04" font-size="5.6" fill="#3a2cc0" text-anchor="middle" font-weight="bold">dB-SPL</text>
<line x1="655.7" y1="196.1" x2="655.7" y2="253.5" stroke="#e02020" stroke-width="2" />
<line x1="688.1" y1="196.1" x2="688.1" y2="253.5" stroke="#e02020" stroke-width="2" />
<line x1="725.6" y1="196.1" x2="725.6" y2="253.5" stroke="#e02020" stroke-width="2" />
<text transform="translate(522.5,274) scale(1,1.18)" y="2.59" font-size="7.1" fill="#141414" text-anchor="start" stroke="#141414" stroke-width="0.07" >Found Room Modes:</text>
<rect x="522.5" y="281.5" width="329" height="194" fill="#ffffff" stroke="#8a8a8a"/>
<linearGradient id="hdr" x1="0" y1="0" x2="0" y2="1"><stop offset="0" stop-color="#ffffff"/><stop offset="1" stop-color="#f2f3f5"/></linearGradient>
<rect x="523" y="282" width="328" height="15.5" fill="url(#hdr)" />
<line x1="523" y1="297.5" x2="851" y2="297.5" stroke="#e2e3e5" stroke-width="1" />
<line x1="554" y1="282" x2="554" y2="297" stroke="#e4e5e8" stroke-width="1" />
<line x1="554" y1="298" x2="554" y2="475" stroke="#f2f2f2" stroke-width="1" />
<line x1="588" y1="282" x2="588" y2="297" stroke="#e4e5e8" stroke-width="1" />
<line x1="588" y1="298" x2="588" y2="475" stroke="#f2f2f2" stroke-width="1" />
<line x1="622" y1="282" x2="622" y2="297" stroke="#e4e5e8" stroke-width="1" />
<line x1="622" y1="298" x2="622" y2="475" stroke="#f2f2f2" stroke-width="1" />
<line x1="655.5" y1="282" x2="655.5" y2="297" stroke="#e4e5e8" stroke-width="1" />
<line x1="655.5" y1="298" x2="655.5" y2="475" stroke="#f2f2f2" stroke-width="1" />
<line x1="689.5" y1="282" x2="689.5" y2="297" stroke="#e4e5e8" stroke-width="1" />
<line x1="689.5" y1="298" x2="689.5" y2="475" stroke="#f2f2f2" stroke-width="1" />
<line x1="523" y1="309.4" x2="851" y2="309.4" stroke="#f3f3f3" stroke-width="1" />
<line x1="523" y1="320.9" x2="851" y2="320.9" stroke="#f3f3f3" stroke-width="1" />
<line x1="523" y1="332.4" x2="851" y2="332.4" stroke="#f3f3f3" stroke-width="1" />
<line x1="523" y1="343.8" x2="851" y2="343.8" stroke="#f3f3f3" stroke-width="1" />
<line x1="523" y1="355.2" x2="851" y2="355.2" stroke="#f3f3f3" stroke-width="1" />
<line x1="523" y1="366.7" x2="851" y2="366.7" stroke="#f3f3f3" stroke-width="1" />
<line x1="523" y1="378.1" x2="851" y2="378.1" stroke="#f3f3f3" stroke-width="1" />
<line x1="523" y1="389.6" x2="851" y2="389.6" stroke="#f3f3f3" stroke-width="1" />
<line x1="523" y1="401.1" x2="851" y2="401.1" stroke="#f3f3f3" stroke-width="1" />
<line x1="523" y1="412.5" x2="851" y2="412.5" stroke="#f3f3f3" stroke-width="1" />
<line x1="523" y1="423.9" x2="851" y2="423.9" stroke="#f3f3f3" stroke-width="1" />
<line x1="523" y1="435.4" x2="851" y2="435.4" stroke="#f3f3f3" stroke-width="1" />
<line x1="523" y1="446.9" x2="851" y2="446.9" stroke="#f3f3f3" stroke-width="1" />
<line x1="523" y1="458.3" x2="851" y2="458.3" stroke="#f3f3f3" stroke-width="1" />
<line x1="523" y1="469.8" x2="851" y2="469.8" stroke="#f3f3f3" stroke-width="1" />
<text transform="translate(527.5,290) scale(1,1.18)" y="2.59" font-size="7.1" fill="#141414" text-anchor="start" stroke="#141414" stroke-width="0.07" >Enable</text>
<text transform="translate(557.5,290) scale(1,1.18)" y="2.59" font-size="7.1" fill="#141414" text-anchor="start" stroke="#141414" stroke-width="0.07" >f [Hz]</text>
<text transform="translate(592,290) scale(1,1.18)" y="2.59" font-size="7.1" fill="#141414" text-anchor="start" stroke="#141414" stroke-width="0.07" >Q</text>
<text transform="translate(625.7,290) scale(1,1.18)" y="2.59" font-size="7.1" fill="#141414" text-anchor="start" stroke="#141414" stroke-width="0.07" >G [dB]</text>
<text transform="translate(660,290) scale(1,1.18)" y="2.59" font-size="7.1" fill="#141414" text-anchor="start" stroke="#141414" stroke-width="0.07" >Type</text>
<text transform="translate(862,63.5) scale(1,1.18)" y="2.63" font-size="7.2" fill="#141414" text-anchor="start" stroke="#141414" stroke-width="0.07" >Show</text>
<line x1="880" y1="63.5" x2="957.5" y2="63.5" stroke="#dedede" stroke-width="1" />
<line x1="880" y1="64.5" x2="957.5" y2="64.5" stroke="#fbfbfb" stroke-width="1" />
<line x1="957.5" y1="63.5" x2="957.5" y2="146" stroke="#dedede" stroke-width="1" />
<line x1="958.5" y1="63.5" x2="958.5" y2="146" stroke="#fbfbfb" stroke-width="1" />
<line x1="943" y1="151.5" x2="957.5" y2="151.5" stroke="#dedede" stroke-width="1" />
<line x1="943" y1="152.5" x2="957.5" y2="152.5" stroke="#fbfbfb" stroke-width="1" />
<line x1="957.5" y1="151.5" x2="957.5" y2="276.5" stroke="#dedede" stroke-width="1" />
<line x1="958.5" y1="151.5" x2="958.5" y2="276.5" stroke="#fbfbfb" stroke-width="1" />
<line x1="857" y1="276.5" x2="957.5" y2="276.5" stroke="#dedede" stroke-width="1" />
<line x1="857" y1="277.5" x2="957.5" y2="277.5" stroke="#fbfbfb" stroke-width="1" />
<rect x="862.5" y="72.6" width="8" height="8" fill="#f8f8f8" stroke="#9a9a9a"/>
<rect x="863.5" y="73.6" width="6" height="6" fill="#e6e6e6" stroke="#d8d8d8" stroke-width="0.6"/>
<path d="M864.3 76.6 L865.8 78.69999999999999 L868.9 74.0" fill="none" stroke="#2a3a78" stroke-width="1.15"/>
<text transform="translate(872.7,76.3) scale(1,1.18)" y="2.63" font-size="7.2" fill="#141414" text-anchor="start" stroke="#141414" stroke-width="0.07" >Result</text>
<rect x="862.5" y="83.2" width="8" height="8" fill="#f8f8f8" stroke="#9a9a9a"/>
<rect x="863.5" y="84.2" width="6" height="6" fill="#e6e6e6" stroke="#d8d8d8" stroke-width="0.6"/>
<text transform="translate(872.7,86.9) scale(1,1.18)" y="2.63" font-size="7.2" fill="#141414" text-anchor="start" stroke="#141414" stroke-width="0.07" >Modes</text>
<rect x="862.5" y="93.7" width="8" height="8" fill="#f8f8f8" stroke="#9a9a9a"/>
<rect x="863.5" y="94.7" width="6" height="6" fill="#e6e6e6" stroke="#d8d8d8" stroke-width="0.6"/>
<path d="M864.3 97.7 L865.8 99.8 L868.9 95.10000000000001" fill="none" stroke="#2a3a78" stroke-width="1.15"/>
<text transform="translate(872.7,97.4) scale(1,1.18)" y="2.63" font-size="7.2" fill="#141414" text-anchor="start" stroke="#141414" stroke-width="0.07" >Measured</text>
<rect x="862.5" y="109.3" width="8" height="8" fill="#f8f8f8" stroke="#9a9a9a"/>
<rect x="863.5" y="110.3" width="6" height="6" fill="#e6e6e6" stroke="#d8d8d8" stroke-width="0.6"/>
<text transform="translate(872.7,113) scale(1,1.18)" y="2.63" font-size="7.2" fill="#141414" text-anchor="start" stroke="#141414" stroke-width="0.07" >Measured RTA</text>
<rect x="862.5" y="120.3" width="8" height="8" fill="#f8f8f8" stroke="#9a9a9a"/>
<rect x="863.5" y="121.3" width="6" height="6" fill="#e6e6e6" stroke="#d8d8d8" stroke-width="0.6"/>
<text transform="translate(872.7,124) scale(1,1.18)" y="2.63" font-size="7.2" fill="#141414" text-anchor="start" stroke="#141414" stroke-width="0.07" >Result RTA</text>
<rect x="862.5" y="135.3" width="8" height="8" fill="#f8f8f8" stroke="#9a9a9a"/>
<rect x="863.5" y="136.3" width="6" height="6" fill="#e6e6e6" stroke="#d8d8d8" stroke-width="0.6"/>
<path d="M864.3 139.3 L865.8 141.4 L868.9 136.70000000000002" fill="none" stroke="#2a3a78" stroke-width="1.15"/>
<text transform="translate(872.7,139) scale(1,1.18)" y="2.63" font-size="7.2" fill="#141414" text-anchor="start" stroke="#141414" stroke-width="0.07" >Magnitude @ cursor</text>
<text transform="translate(862,151.3) scale(1,1.18)" y="2.63" font-size="7.2" fill="#141414" text-anchor="start" stroke="#141414" stroke-width="0.07" >Calculated Room Modes</text>
<rect x="911.5" y="162.0" width="29" height="14" fill="#ffffff" stroke="#e2e2e2"/>
<line x1="911.5" y1="162.0" x2="940" y2="162.0" stroke="#c8c8c8" stroke-width="1" />
<text transform="translate(912.5,167.8) scale(1,1.18)" y="2.7" font-size="7.4" fill="#101010" text-anchor="start" stroke="#101010" stroke-width="0.07" >6.00</text>
<rect x="940.5" y="162.0" width="9" height="7.0" fill="url(#spg)" stroke="#d2d2d2"/>
<rect x="940.5" y="169.5" width="9" height="6.5" fill="url(#spg)" stroke="#d2d2d2"/>
<path d="M943.0 166.45 H947.0 L945.0 164.25 Z" fill="#4a4a4a"/>
<path d="M943.0 171.95 H947.0 L945.0 174.15 Z" fill="#4a4a4a"/>
<text transform="translate(908,167.8) scale(1,1.18)" y="2.63" font-size="7.2" fill="#141414" text-anchor="end" stroke="#141414" stroke-width="0.07" >Length (m)</text>
<rect x="911.5" y="180.0" width="29" height="14" fill="#ffffff" stroke="#e2e2e2"/>
<line x1="911.5" y1="180.0" x2="940" y2="180.0" stroke="#c8c8c8" stroke-width="1" />
<text transform="translate(912.5,185.8) scale(1,1.18)" y="2.7" font-size="7.4" fill="#101010" text-anchor="start" stroke="#101010" stroke-width="0.07" >4.00</text>
<rect x="940.5" y="180.0" width="9" height="7.0" fill="url(#spg)" stroke="#d2d2d2"/>
<rect x="940.5" y="187.5" width="9" height="6.5" fill="url(#spg)" stroke="#d2d2d2"/>
<path d="M943.0 184.45 H947.0 L945.0 182.25 Z" fill="#4a4a4a"/>
<path d="M943.0 189.95 H947.0 L945.0 192.15 Z" fill="#4a4a4a"/>
<text transform="translate(908,185.8) scale(1,1.18)" y="2.63" font-size="7.2" fill="#141414" text-anchor="end" stroke="#141414" stroke-width="0.07" >Width (m)</text>
<rect x="911.5" y="197.5" width="29" height="14" fill="#ffffff" stroke="#e2e2e2"/>
<line x1="911.5" y1="197.5" x2="940" y2="197.5" stroke="#c8c8c8" stroke-width="1" />
<text transform="translate(912.5,203.3) scale(1,1.18)" y="2.7" font-size="7.4" fill="#101010" text-anchor="start" stroke="#101010" stroke-width="0.07" >2.50</text>
<rect x="940.5" y="197.5" width="9" height="7.0" fill="url(#spg)" stroke="#d2d2d2"/>
<rect x="940.5" y="205.0" width="9" height="6.5" fill="url(#spg)" stroke="#d2d2d2"/>
<path d="M943.0 201.95 H947.0 L945.0 199.75 Z" fill="#4a4a4a"/>
<path d="M943.0 207.45 H947.0 L945.0 209.65 Z" fill="#4a4a4a"/>
<text transform="translate(908,203.3) scale(1,1.18)" y="2.63" font-size="7.2" fill="#141414" text-anchor="end" stroke="#141414" stroke-width="0.07" >Height (m)</text>
<rect x="911.5" y="255.0" width="29" height="14" fill="#ffffff" stroke="#e2e2e2"/>
<line x1="911.5" y1="255.0" x2="940" y2="255.0" stroke="#c8c8c8" stroke-width="1" />
<text transform="translate(912.5,260.8) scale(1,1.18)" y="2.7" font-size="7.4" fill="#101010" text-anchor="start" stroke="#101010" stroke-width="0.07" >1</text>
<rect x="940.5" y="255.0" width="9" height="7.0" fill="url(#spg)" stroke="#d2d2d2"/>
<rect x="940.5" y="262.5" width="9" height="6.5" fill="url(#spg)" stroke="#d2d2d2"/>
<path d="M943.0 259.45 H947.0 L945.0 257.25 Z" fill="#4a4a4a"/>
<path d="M943.0 264.95 H947.0 L945.0 267.15 Z" fill="#4a4a4a"/>
<text transform="translate(908,260.8) scale(1,1.18)" y="2.63" font-size="7.2" fill="#141414" text-anchor="end" stroke="#141414" stroke-width="0.07" >n Modes</text>
<rect x="862.0" y="219.3" width="8" height="8" fill="#f8f8f8" stroke="#9a9a9a"/>
<rect x="863.0" y="220.3" width="6" height="6" fill="#e6e6e6" stroke="#d8d8d8" stroke-width="0.6"/>
<path d="M863.8 223.3 L865.3 225.4 L868.4 220.70000000000002" fill="none" stroke="#2a3a78" stroke-width="1.15"/>
<text transform="translate(872.5,223) scale(1,1.18)" y="2.63" font-size="7.2" fill="#141414" text-anchor="start" stroke="#141414" stroke-width="0.07" >Show Axial Modes</text>
<rect x="862.0" y="230.1" width="8" height="8" fill="#f8f8f8" stroke="#9a9a9a"/>
<rect x="863.0" y="231.1" width="6" height="6" fill="#e6e6e6" stroke="#d8d8d8" stroke-width="0.6"/>
<text transform="translate(872.5,233.8) scale(1,1.18)" y="2.63" font-size="7.2" fill="#141414" text-anchor="start" stroke="#141414" stroke-width="0.07" >Show Tangential Modes</text>
<rect x="862.0" y="241.3" width="8" height="8" fill="#f8f8f8" stroke="#9a9a9a"/>
<rect x="863.0" y="242.3" width="6" height="6" fill="#e6e6e6" stroke="#d8d8d8" stroke-width="0.6"/>
<text transform="translate(872.5,245) scale(1,1.18)" y="2.63" font-size="7.2" fill="#141414" text-anchor="start" stroke="#141414" stroke-width="0.07" >Show Oblique Modes</text>
<linearGradient id="tab" x1="0" y1="0" x2="0" y2="1"><stop offset="0" stop-color="#f0f0f0"/><stop offset="1" stop-color="#dcdcdc"/></linearGradient>
<rect x="79" y="480" width="160" height="12.5" fill="url(#tab)" />
<rect x="79" y="492.5" width="890" height="3.5" fill="#f6f6f8" />
<line x1="79.5" y1="480.5" x2="79.5" y2="492" stroke="#8a8a8a" stroke-width="1" />
<line x1="112.5" y1="480.5" x2="112.5" y2="492" stroke="#8a8a8a" stroke-width="1" />
<line x1="141" y1="480.5" x2="141" y2="492" stroke="#8a8a8a" stroke-width="1" />
<line x1="178.5" y1="480.5" x2="178.5" y2="492" stroke="#8a8a8a" stroke-width="1" />
<line x1="208.5" y1="480.5" x2="208.5" y2="492" stroke="#8a8a8a" stroke-width="1" />
<rect x="239" y="480" width="51" height="15.5" fill="#ffffff" />
<line x1="290.5" y1="480" x2="290.5" y2="495.5" stroke="#a0a0a0" stroke-width="1" />
<text transform="translate(84,486.3) scale(1,1.18)" y="2.59" font-size="7.1" fill="#141414" text-anchor="start" stroke="#141414" stroke-width="0.07" >Capture</text>
<text transform="translate(117,486.3) scale(1,1.18)" y="2.59" font-size="7.1" fill="#141414" text-anchor="start" stroke="#141414" stroke-width="0.07" >Target</text>
<text transform="translate(146,486.3) scale(1,1.18)" y="2.59" font-size="7.1" fill="#141414" text-anchor="start" stroke="#141414" stroke-width="0.07" >Optimizer</text>
<text transform="translate(183,486.3) scale(1,1.18)" y="2.59" font-size="7.1" fill="#141414" text-anchor="start" stroke="#141414" stroke-width="0.07" >Output</text>
<text transform="translate(211.5,486.3) scale(1,1.18)" y="2.59" font-size="7.1" fill="#484848" text-anchor="start" stroke="#484848" stroke-width="0.07" >X-Over</text>
<text transform="translate(243.5,487.5) scale(1,1.18)" y="2.59" font-size="7.1" fill="#141414" text-anchor="start" stroke="#141414" stroke-width="0.07" >Room Modes</text>
<rect x="5" y="496" width="964" height="13" fill="#f0f0ec" />
<line x1="5" y1="496.5" x2="969" y2="496.5" stroke="#c8c4d0" stroke-width="1" />
<line x1="5" y1="497.5" x2="969" y2="497.5" stroke="#fafaf6" stroke-width="1" />
<line x1="710.5" y1="498" x2="710.5" y2="509" stroke="#dcd8e0" stroke-width="1" />
<line x1="793" y1="498" x2="793" y2="509" stroke="#dcd8e0" stroke-width="1" />
<line x1="874" y1="498" x2="874" y2="509" stroke="#dcd8e0" stroke-width="1" />
<line x1="956.5" y1="498" x2="956.5" y2="509" stroke="#dcd8e0" stroke-width="1" />
<text transform="translate(7,503.8) scale(1,1.18)" y="2.7" font-size="7.4" fill="#141414" text-anchor="start" stroke="#141414" stroke-width="0.07" >For Help, press F1</text>
<text transform="translate(632,503.8) scale(1,1.18)" y="2.7" font-size="7.4" fill="#141414" text-anchor="start" stroke="#141414" stroke-width="0.07" >Time: 8.0ms</text>
<text transform="translate(713.5,503.8) scale(1,1.18)" y="2.7" font-size="7.4" fill="#141414" text-anchor="start" stroke="#141414" stroke-width="0.07" >Freq: 70.32Hz</text>
<text transform="translate(796,503.8) scale(1,1.18)" y="2.7" font-size="7.4" fill="#141414" text-anchor="start" stroke="#141414" stroke-width="0.07" >Mag:</text>
</svg>
</body></html>
